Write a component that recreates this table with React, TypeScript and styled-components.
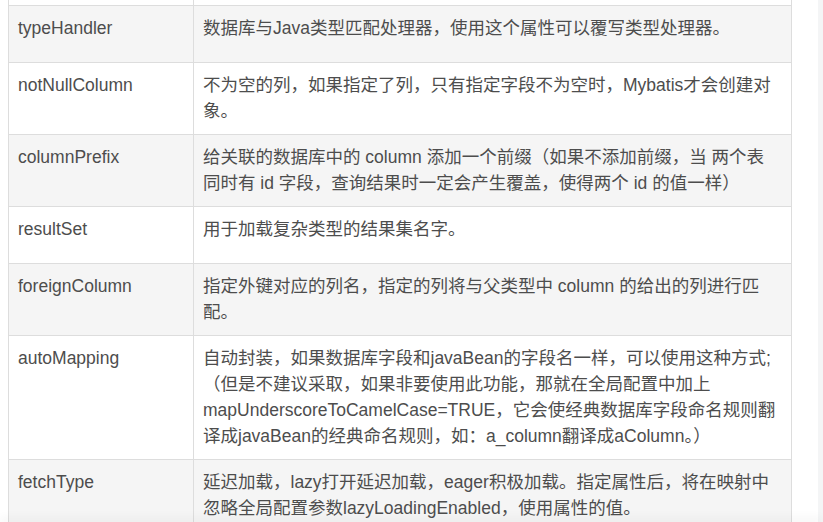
import { ReactNode } from 'react';
import styled, { createGlobalStyle } from 'styled-components';

const GlobalStyle = createGlobalStyle`
	html,
	body {
		margin: 0;
		padding: 0;
		height: 100%;
		overflow: hidden;
		background-color: #f4f5f6;
	}
`;

const Page = styled.main`
	width: 818px;
	min-height: 100vh;
	background-color: #ffffff;
	padding: 0 8px;
	box-sizing: border-box;
`;

const Table = styled.table`
	width: 784px;
	table-layout: fixed;
	border-collapse: collapse;
	font-family: 'Liberation Sans', Arial, 'Noto Sans CJK SC', sans-serif;
	font-size: 17.5px;
	line-height: 26px;
	color: #4d4d4d;
`;

type RowProps = { $striped: boolean };
const Row = styled.tr<RowProps>`
	background-color: ${(props) => (props.$striped ? '#f5f5f5' : '#ffffff')};
`;

const Cell = styled.td`
	border: 1px solid #dddddd;
	padding: 9px 9px 10px;
	height: 37px;
	vertical-align: top;
`;

const Spacer = styled.td`
	border: 1px solid #dddddd;
	border-top: none;
	height: 5px;
	padding: 0;
`;

const BottomShade = styled.div`
	position: fixed;
	left: 0;
	right: 0;
	bottom: -6px;
	height: 6px;
	box-shadow: 0 -4px 10px rgba(0, 0, 0, 0.05);
	background-color: #ffffff;
`;

type Attribute = {
	name: string;
	description: ReactNode;
};

const attributes: Attribute[] = [
	{
		name: 'typeHandler',
		description: '数据库与Java类型匹配处理器，使用这个属性可以覆写类型处理器。',
	},
	{
		name: 'notNullColumn',
		description:
			'不为空的列，如果指定了列，只有指定字段不为空时，Mybatis才会创建对象。',
	},
	{
		name: 'columnPrefix',
		description: (
			<>
				给关联的数据库中的 column 添加一个前缀（如果不添加前缀，当 两个表
				<br />
				同时有 id 字段，查询结果时一定会产生覆盖，使得两个 id 的值一样）
			</>
		),
	},
	{
		name: 'resultSet',
		description: '用于加载复杂类型的结果集名字。',
	},
	{
		name: 'foreignColumn',
		description:
			'指定外键对应的列名，指定的列将与父类型中 column 的给出的列进行匹配。',
	},
	{
		name: 'autoMapping',
		description: (
			<>
				自动封装，如果数据库字段和javaBean的字段名一样，可以使用这种方式;
				<br />
				（但是不建议采取，如果非要使用此功能，那就在全局配置中加上
				<br />
				mapUnderscoreToCamelCase=TRUE，它会使经典数据库字段命名规则翻
				<br />
				译成javaBean的经典命名规则，如：a_column翻译成aColumn。）
			</>
		),
	},
	{
		name: 'fetchType',
		description:
			'延迟加载，lazy打开延迟加载，eager积极加载。指定属性后，将在映射中忽略全局配置参数lazyLoadingEnabled，使用属性的值。',
	},
];

const App = () => {
	return (
		<>
			<GlobalStyle />
			<Page>
				<Table>
					<colgroup>
						<col style={{ width: '185px' }} />
						<col />
					</colgroup>
					<tbody>
						<Row $striped={false}>
							<Spacer />
							<Spacer />
						</Row>
						{attributes.map((attr, i) => (
							<Row key={attr.name} $striped={i % 2 === 0}>
								<Cell>{attr.name}</Cell>
								<Cell>{attr.description}</Cell>
							</Row>
						))}
					</tbody>
				</Table>
			</Page>
			<BottomShade />
		</>
	);
};

export default App;
